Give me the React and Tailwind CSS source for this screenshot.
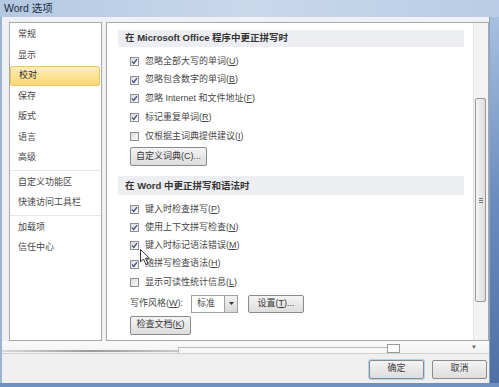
import React from "react";

const navGroups = [
  ["常规", "显示", "校对", "保存", "版式", "语言", "高级"],
  ["自定义功能区", "快速访问工具栏"],
  ["加载项", "信任中心"],
];

const spellItems = [
  { label: "忽略全部大写的单词", key: "U", checked: true },
  { label: "忽略包含数字的单词", key: "B", checked: true },
  { label: "忽略 Internet 和文件地址", key: "F", checked: true },
  { label: "标记重复单词", key: "R", checked: true },
  { label: "仅根据主词典提供建议", key: "I", checked: false },
];

const grammarItems = [
  { label: "键入时检查拼写", key: "P", checked: true },
  { label: "使用上下文拼写检查", key: "N", checked: true },
  { label: "键入时标记语法错误", key: "M", checked: true },
  { label: "随拼写检查语法", key: "H", checked: true },
  { label: "显示可读性统计信息", key: "L", checked: false },
];

const Checkbox = ({ checked }) => (
  <div className="w-[9px] h-[9px] border border-[#8e8f8f] bg-gradient-to-br from-[#dcdcdc] to-[#fbfbfb] flex items-center justify-center shrink-0">
    {checked && (
      <svg width="7" height="7" viewBox="0 0 7 7">
        <path d="M1 3.6 L2.8 5.4 L6 1.2" fill="none" stroke="#3d5a8c" strokeWidth="1.4" />
      </svg>
    )}
  </div>
);

const Option = ({ item, h }) => (
  <div className={`flex items-center gap-[6px] pl-[23px] ${h}`}>
    <Checkbox checked={item.checked} />
    <span>
      {item.label}(<span className="underline">{item.key}</span>)
    </span>
  </div>
);

const Button = ({ children, className = "" }) => (
  <div
    className={`flex items-center justify-center border border-[#8a8a8a] rounded-[2px] bg-gradient-to-b from-[#f4f4f4] to-[#dddddd] text-[#3a3a3a] ${className}`}
  >
    {children}
  </div>
);

const SectionHeader = ({ children, className = "" }) => (
  <div className={`ml-[11px] mr-[9px] bg-[#eceef1] flex items-center pl-[7px] font-bold text-[9.5px] text-[#333] ${className}`}>
    {children}
  </div>
);

export default function App() {
  return (
    <div className="w-[499px] h-[387px] flex flex-col bg-[#f0f0f0] overflow-hidden relative text-[9px] text-[#474747] font-['Liberation_Sans','Noto_Sans_CJK_SC',sans-serif]">
      {/* Title bar */}
      <div className="h-[17px] shrink-0 bg-gradient-to-r from-[#b3c8e2] via-[#c9d9ec] to-[#b8cce5] flex items-center pl-[4px] text-[10.5px] text-[#1c2b40]">
        Word 选项
      </div>

      <div className="flex-1 flex min-h-0">
        <div className="w-[2px] bg-[#9cb3d2]" />

        <div className="flex-1 flex flex-col min-w-0 bg-gradient-to-b from-[#eef1f5] to-[#f0f0f0]">
          <div className="flex pt-[5px] pl-[7px] h-[324px] gap-[4px]">
            {/* Navigation */}
            <div className="w-[93px] bg-white border border-[#a9a9a9] pt-[1.5px]">
              {navGroups.map((group, gi) => (
                <div key={gi} className={gi > 0 ? "border-t border-[#e6e6e6] mt-[1.5px] pt-[1.5px]" : ""}>
                  {group.map((item) => (
                    <div
                      key={item}
                      className={`h-[20.5px] flex items-center pl-[8px] mr-[1px] ${
                        item === "校对"
                          ? "bg-gradient-to-b from-[#fdeeb3] to-[#fbd774] border border-[#e8c46a] rounded-[2px] pl-[7px] text-[#2a2a2a]"
                          : ""
                      }`}
                    >
                      {item}
                    </div>
                  ))}
                </div>
              ))}
            </div>

            {/* Content */}
            <div className="flex-1 flex bg-white border border-[#a9a9a9] min-w-0">
              <div className="flex-1 flex flex-col pt-[7px] min-w-0">
                <SectionHeader className="h-[17px]">
                  在 Microsoft Office 程序中更正拼写时
                </SectionHeader>
                <div className="mt-[5px]">
                  {spellItems.map((item) => (
                    <Option key={item.key} item={item} h="h-[18.75px]" />
                  ))}
                </div>
                <div className="pl-[23px] mt-[1.5px]">
                  <Button className="w-[77px] h-[19px]">自定义词典(C)...</Button>
                </div>
                <SectionHeader className="h-[19px] mt-[10px]">
                  在 Word 中更正拼写和语法时
                </SectionHeader>
                <div className="mt-[5px]">
                  {grammarItems.map((item) => (
                    <Option key={item.key} item={item} h="h-[18.25px]" />
                  ))}
                </div>
                <div className="flex items-center pl-[23px] mt-[3px] h-[18px]">
                  <span className="w-[61px]">
                    写作风格(<span className="underline">W</span>):
                  </span>
                  <div className="w-[47px] h-[18px] border border-[#a0a0a0] bg-white flex items-center">
                    <span className="flex-1 pl-[5px]">标准</span>
                    <div className="w-[13px] h-full border-l border-[#a0a0a0] bg-gradient-to-b from-[#f2f2f2] to-[#d9d9d9] flex items-center justify-center">
                      <svg width="5" height="3" viewBox="0 0 5 3">
                        <path d="M0 0 L5 0 L2.5 3 Z" fill="#333" />
                      </svg>
                    </div>
                  </div>
                  <Button className="w-[56px] h-[18px] ml-[10px]">
                    设置(<span className="underline">T</span>)...
                  </Button>
                </div>
                <div className="pl-[23px] mt-[3px]">
                  <Button className="w-[61px] h-[19px]">
                    检查文档(<span className="underline">K</span>)
                  </Button>
                </div>
              </div>

              {/* Scrollbar */}
              <div className="w-[15px] bg-[#f3f3f3] border-l border-[#e2e2e2] flex flex-col pt-[75px]">
                <div className="ml-[1px] w-[11px] h-[204px] rounded-[2px] border border-[#9a9a9a] bg-gradient-to-r from-[#f4f4f4] to-[#dedede] flex items-center justify-center">
                  <div className="flex flex-col gap-[1px]">
                    <div className="w-[4px] h-[1px] bg-[#777]" />
                    <div className="w-[4px] h-[1px] bg-[#777]" />
                    <div className="w-[4px] h-[1px] bg-[#777]" />
                  </div>
                </div>
              </div>
            </div>
          </div>

          {/* Strip under panels */}
          <div className="h-[13px] bg-gradient-to-b from-[#fafafa] to-[#f3f3f3] border-b border-[#d0d0d0] flex items-end relative">
            <div className="w-[176px] h-[2px] bg-gradient-to-r from-[#d9d9d9] via-[#9a9a9a] to-[#c9c9c9] mb-[1px]" />
            <div className="w-[222px] h-[6px] border-t border-l border-[#b9b9b9] bg-[#f7f7f7]" />
            <div className="ml-[-13px] w-[13px] h-[9px] border border-[#9a9a9a] bg-white" />
            <span className="absolute right-[12px] top-[2px] text-[6px] text-[#666]">▼</span>
          </div>

          {/* Bottom buttons */}
          <div className="flex-1 flex items-center justify-end gap-[8px] pr-[2px] pt-[1px] bg-[#efefef]">
            <Button className="w-[55px] h-[19px] border-[#3c7fb1] shadow-[0_0_0_1px_#a9d6f2]">确定</Button>
            <Button className="w-[55px] h-[19px]">取消</Button>
          </div>
        </div>

        <div className="w-[10px] bg-gradient-to-b from-[#a8c0e0] via-[#6b8cbe] to-[#4f70a5] border-l border-[#8fa3c0]" />
      </div>

      <div className="h-[4px] shrink-0 bg-[#6f90c0]" />

      {/* Mouse cursor */}
      <svg className="absolute left-[140px] top-[249px]" width="11" height="17" viewBox="0 0 11 17">
        <path d="M0.5 0.5 L0.5 13 L3.5 10 L6 15.5 L8 14.5 L5.5 9.2 L9.5 9.2 Z" fill="#fff" stroke="#222" strokeWidth="0.9" />
      </svg>
    </div>
  );
}
